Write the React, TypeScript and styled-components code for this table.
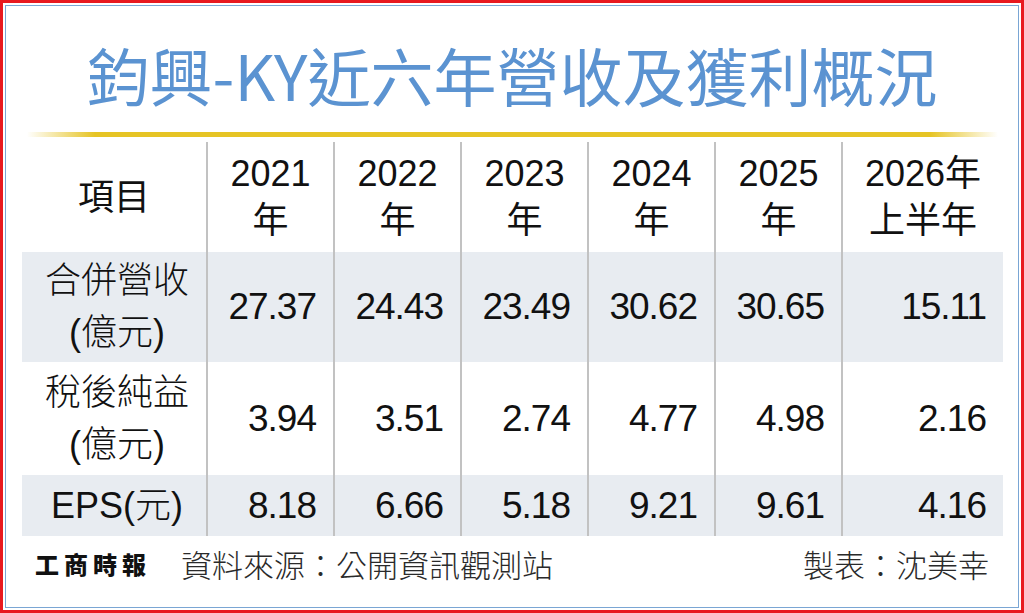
import React from "react";
import styled, { createGlobalStyle } from "styled-components";

const Global = createGlobalStyle`
  html, body { margin: 0; padding: 0; background: #ffffff; }
  body { font-family: "Liberation Sans", "Noto Sans CJK TC", sans-serif; }
  * { box-sizing: border-box; }
`;

const Frame = styled.div`
  width: 1024px;
  height: 613px;
  border: 3px solid #e8191f;
  padding: 2px;
  background: #ffffff;
`;

const Inner = styled.div`
  height: 100%;
  border: 1px solid #7aa6d4;
  display: flex;
  flex-direction: column;
  align-items: stretch;
`;

const Title = styled.h1`
  margin: 32px 0 0;
  font-family: "Noto Sans CJK TC", sans-serif;
  font-weight: 400;
  font-size: 63px;
  line-height: 71px;
  color: #5b93d1;
  text-align: center;
`;

const GoldRule = styled.div`
  margin: 23px 20px 0 21px;
  height: 5px;
  background: linear-gradient(
    to right,
    rgba(232, 196, 36, 0) 0%,
    #e6c424 7%,
    #e6c424 93%,
    rgba(232, 196, 36, 0) 100%
  );
`;

const Table = styled.div`
  margin: 5px 15px 0 16px;
  display: grid;
  grid-template-columns: 184px repeat(5, 127px) 1fr;
  grid-template-rows: 110px 110px 113px 61px;
`;

const Cell = styled.div<{ $stripe?: boolean; $first?: boolean; $align?: "center" | "right" }>`
  display: flex;
  flex-direction: column;
  justify-content: center;
  align-items: ${(p) => (p.$align === "right" ? "flex-end" : "center")};
  padding: ${(p) => (p.$align === "right" ? "0 17px 0 0" : "0")};
  background: ${(p) => (p.$stripe ? "#e8ecf1" : "transparent")};
  border-left: ${(p) => (p.$first ? "none" : "2px solid #c2c2c2")};
  color: #111111;
`;

const HeadText = styled.div`
  font-size: 36px;
  line-height: 47px;
  text-align: center;
  font-family: "Liberation Sans", "Noto Sans CJK TC", sans-serif;
`;

const Label = styled.div`
  font-family: "Liberation Sans", "Noto Sans CJK TC", sans-serif;
  font-weight: 300;
  font-size: 36px;
  line-height: 52px;
  text-align: center;
  padding-left: 6px;
`;

const Num = styled.div`
  font-size: 37px;
  letter-spacing: -1px;
  line-height: 44px;
  font-family: "Liberation Sans", sans-serif;
`;

const Footer = styled.div`
  flex: 1;
  display: flex;
  align-items: flex-start;
  padding: 8px 29px 0 29px;
  font-family: "Noto Sans CJK TC", sans-serif;
  color: #2a2a2a;
`;

const Logo = styled.span`
  font-family: "Noto Sans CJK TC", serif;
  font-weight: 900;
  font-size: 24px;
  line-height: 40px;
  letter-spacing: 5px;
  color: #111111;
  margin-right: 30px;
`;

const Note = styled.span`
  font-size: 31px;
  font-weight: 300;
  line-height: 40px;
`;

const Spacer = styled.span`
  flex: 1;
`;

const years = [
  ["2021", "年"],
  ["2022", "年"],
  ["2023", "年"],
  ["2024", "年"],
  ["2025", "年"],
  ["2026年", "上半年"],
];

const rows: { label: string[]; values: string[]; stripe: boolean }[] = [
  { label: ["合併營收", "(億元)"], values: ["27.37", "24.43", "23.49", "30.62", "30.65", "15.11"], stripe: true },
  { label: ["稅後純益", "(億元)"], values: ["3.94", "3.51", "2.74", "4.77", "4.98", "2.16"], stripe: false },
  { label: ["EPS(元)"], values: ["8.18", "6.66", "5.18", "9.21", "9.61", "4.16"], stripe: true },
];

export default function App() {
  return (
    <>
      <Global />
      <Frame>
        <Inner>
          <Title>鈞興-KY近六年營收及獲利概況</Title>
          <GoldRule />
          <Table>
            <Cell $first>
              <HeadText>項目</HeadText>
            </Cell>
            {years.map((y) => (
              <Cell key={y[0]}>
                <HeadText>{y[0]}</HeadText>
                <HeadText>{y[1]}</HeadText>
              </Cell>
            ))}
            {rows.map((r) => (
              <React.Fragment key={r.label[0]}>
                <Cell $first $stripe={r.stripe}>
                  {r.label.map((l) => (
                    <Label key={l}>{l}</Label>
                  ))}
                </Cell>
                {r.values.map((v, i) => (
                  <Cell key={i} $stripe={r.stripe} $align="right">
                    <Num>{v}</Num>
                  </Cell>
                ))}
              </React.Fragment>
            ))}
          </Table>
          <Footer>
            <Logo>工商時報</Logo>
            <Note>資料來源：公開資訊觀測站</Note>
            <Spacer />
            <Note>製表：沈美幸</Note>
          </Footer>
        </Inner>
      </Frame>
    </>
  );
}
